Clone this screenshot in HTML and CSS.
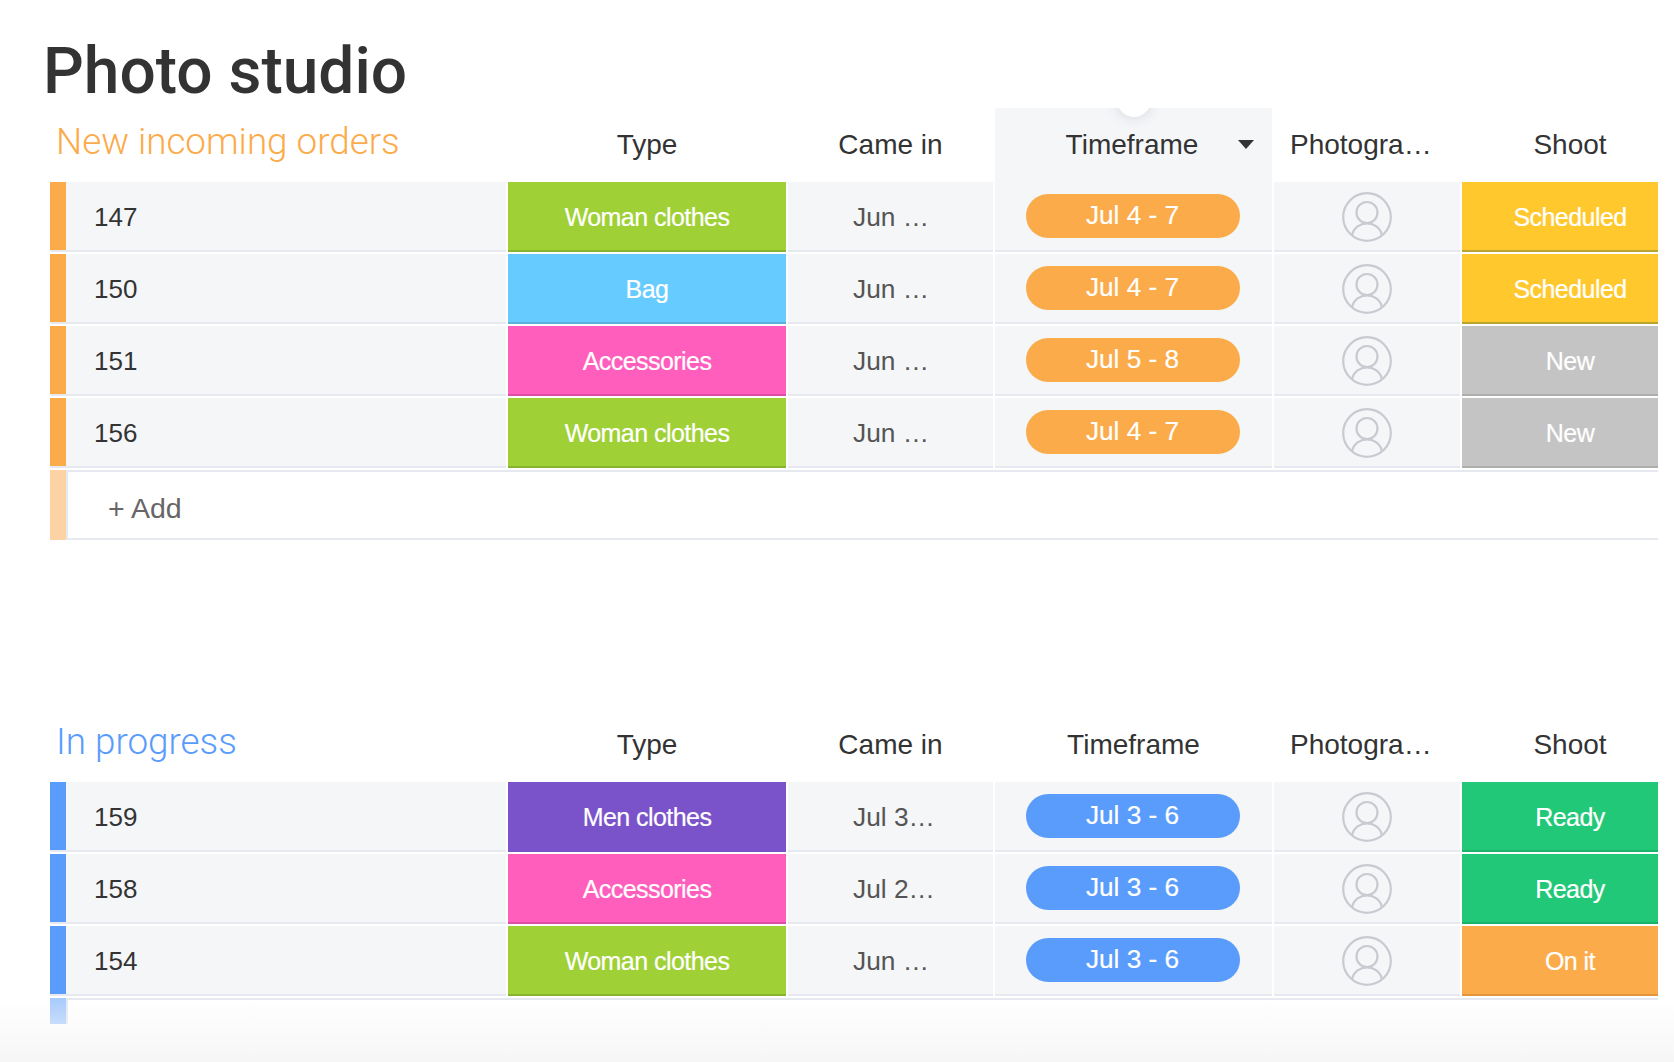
FILE: index.html
```html
<!DOCTYPE html>
<html lang="en">
<head>
<meta charset="utf-8">
<title>Photo studio</title>
<link rel="stylesheet" href="styles.css">
</head>
<body>
<svg class="defs" width="0" height="0" aria-hidden="true"><defs>
<symbol id="person" viewBox="0 0 50 50"><circle cx="25" cy="25" r="23.8" fill="none" stroke="currentColor" stroke-width="2.2"/><circle cx="25" cy="20.500" r="10.500" fill="none" stroke="currentColor" stroke-width="2.2"/><path d="M10 43.500C11.500 36 17.500 31.500 25 31.500S38.500 36 40 43.500" fill="none" stroke="currentColor" stroke-width="2.2"/></symbol>
</defs></svg>
<main class="page">
<h1 class="title">Photo studio</h1>
<div class="board">

<section class="group orange">
<div class="row head">
<h2 class="group-name">New incoming orders</h2>
<div class="col">Type</div>
<div class="col">Came in</div>
<div class="col col-active">Timeframe<span class="arrow"></span></div>
<div class="col col-left">Photogra…</div>
<div class="col">Shoot</div>
</div>
<div class="row"><div class="name"><i class="strip"></i><span>147</span></div><div class="cell label lime">Woman clothes</div><div class="cell date">Jun …</div><div class="cell time"><span class="pill">Jul 4 - 7</span></div><div class="cell who"><svg class="avatar"><use href="#person"/></svg></div><div class="cell label yellow">Scheduled</div></div>
<div class="row"><div class="name"><i class="strip"></i><span>150</span></div><div class="cell label sky">Bag</div><div class="cell date">Jun …</div><div class="cell time"><span class="pill">Jul 4 - 7</span></div><div class="cell who"><svg class="avatar"><use href="#person"/></svg></div><div class="cell label yellow">Scheduled</div></div>
<div class="row"><div class="name"><i class="strip"></i><span>151</span></div><div class="cell label pink">Accessories</div><div class="cell date">Jun …</div><div class="cell time"><span class="pill">Jul 5 - 8</span></div><div class="cell who"><svg class="avatar"><use href="#person"/></svg></div><div class="cell label grey">New</div></div>
<div class="row"><div class="name"><i class="strip"></i><span>156</span></div><div class="cell label lime">Woman clothes</div><div class="cell date">Jun …</div><div class="cell time"><span class="pill">Jul 4 - 7</span></div><div class="cell who"><svg class="avatar"><use href="#person"/></svg></div><div class="cell label grey">New</div></div>
<div class="add"><i class="strip"></i><div class="add-field">+ Add</div></div>
</section>

<section class="group blue">
<div class="row head">
<h2 class="group-name">In progress</h2>
<div class="col">Type</div>
<div class="col">Came in</div>
<div class="col">Timeframe</div>
<div class="col col-left">Photogra…</div>
<div class="col">Shoot</div>
</div>
<div class="row"><div class="name"><i class="strip"></i><span>159</span></div><div class="cell label purple">Men clothes</div><div class="cell date">Jul 3…</div><div class="cell time"><span class="pill">Jul 3 - 6</span></div><div class="cell who"><svg class="avatar"><use href="#person"/></svg></div><div class="cell label green">Ready</div></div>
<div class="row"><div class="name"><i class="strip"></i><span>158</span></div><div class="cell label pink">Accessories</div><div class="cell date">Jul 2…</div><div class="cell time"><span class="pill">Jul 3 - 6</span></div><div class="cell who"><svg class="avatar"><use href="#person"/></svg></div><div class="cell label green">Ready</div></div>
<div class="row"><div class="name"><i class="strip"></i><span>154</span></div><div class="cell label lime">Woman clothes</div><div class="cell date">Jun …</div><div class="cell time"><span class="pill">Jul 3 - 6</span></div><div class="cell who"><svg class="avatar"><use href="#person"/></svg></div><div class="cell label amber">On it</div></div>
<div class="add add-cut"><i class="strip"></i><div class="add-field"></div></div>
</section>

</div>
<div class="fade"></div>
</main>
</body>
</html>
```

FILE: styles.css
```css
* { box-sizing: border-box; }
html, body { margin: 0; padding: 0; background: #fff; }
body { font-family: "Liberation Sans", Arial, sans-serif; color: #333; }
.defs { position: absolute; }
.page { position: relative; height: 1062px; overflow: hidden; }
.title {
  margin: 0;
  height: 108px;
  padding: 34px 0 0 43px;
  font-family: Roboto, "Liberation Sans", sans-serif;
  font-size: 64px;
  line-height: 76px;
  font-weight: 500;
  color: #333;
}
.board { margin-left: 50px; width: 1608px; overflow: hidden; }
.group { width: 1628px; --accent: #fbab4a; --soft: #fdd2a4; }
.group.blue { --accent: #5a9cfc; --soft: #a9ccfd; margin-top: 168px; }
.row {
  display: grid;
  grid-template-columns: 456px 278px 205px 277px 186px 216px;
  column-gap: 2px;
  height: 70px;
  margin-bottom: 2px;
}
.row.head { height: 74px; margin-bottom: 0; }
.group-name {
  margin: 0;
  padding: 7px 0 0 6px;
  height: 62px;
  font-family: Roboto, "Liberation Sans", sans-serif;
  font-size: 36.800px;
  line-height: 54px;
  font-weight: 300;
  color: var(--accent);
  white-space: nowrap;
}
.col {
  display: flex;
  align-items: center;
  justify-content: center;
  font-size: 28px;
  color: #333;
  position: relative;
  overflow: hidden;
  height: 74px;
}
.col-left { justify-content: flex-start; padding-left: 16px; }
.col-active { background: #f5f6f8; padding-right: 3px; }
.col-active::before {
  content: "";
  position: absolute;
  left: 122px;
  top: -25px;
  width: 34px;
  height: 34px;
  border-radius: 50%;
  background: #fff;
  box-shadow: 0 0 14px rgba(90, 95, 120, .22);
}
.arrow {
  position: absolute;
  left: 243px;
  top: 32px;
  width: 0;
  height: 0;
  border-left: 8.5px solid transparent;
  border-right: 8.5px solid transparent;
  border-top: 9px solid #333;
}
.name, .cell {
  background: #f5f6f8;
  border-bottom: 2px solid #e6e9ef;
  display: flex;
  align-items: center;
  font-size: 26px;
  padding-top: 2px;
}
.name { padding-top: 0; }
.name span { margin-left: 28px; padding-top: 2px; color: #333; }
.strip { display: block; width: 16px; flex: none; background: var(--accent); align-self: stretch; }
.cell { justify-content: center; }
.label { color: #fff; font-size: 25px; letter-spacing: -.55px; -webkit-text-stroke: .2px #fff; }
.lime { background: #9fd136; border-bottom-color: #88b32c; }
.sky { background: #66ccff; border-bottom-color: #5bafd9; }
.pink { background: #ff5ebd; border-bottom-color: #e04ca5; }
.purple { background: #7a52c9; border-bottom-color: #7a52c9; }
.yellow { background: #ffc92e; border-bottom-color: #b9a42f; }
.grey { background: #c4c4c4; border-bottom-color: #aeaeac; }
.green { background: #20c878; border-bottom-color: #18b368; }
.amber { background: #fbab4a; border-bottom-color: #e3953a; }
.date { justify-content: flex-start; padding-left: 65px; color: #555; font-size: 26.300px; }
.time { padding-top: 0; padding-right: 2px; }
.who { padding-top: 0; }
.pill {
  width: 214px;
  height: 44px;
  border-radius: 22px;
  background: var(--accent);
  color: #fff;
  display: flex;
  align-items: center;
  justify-content: center;
  padding-bottom: 2px;
  font-size: 26.200px;
  -webkit-text-stroke: .2px #fff;
}
.avatar { width: 50px; height: 50px; color: #c8cad2; display: block; margin-top: 2px; }
.add { display: flex; height: 70px; }
.add-field {
  flex: 1;
  border: 2px solid #e6e9ef;
  border-right: 0;
  display: flex;
  align-items: center;
  padding: 6px 0 0 40px;
  font-size: 28.500px;
  color: #666;
}
.add .strip { background: var(--soft); }
.add-cut { height: 26px; }
.add-cut .add-field { border-bottom: 0; }
.fade {
  position: absolute;
  left: 0;
  right: 0;
  bottom: 0;
  height: 62px;
  background: linear-gradient(to bottom, rgba(246, 246, 247, 0), #f6f6f7);
}
```
